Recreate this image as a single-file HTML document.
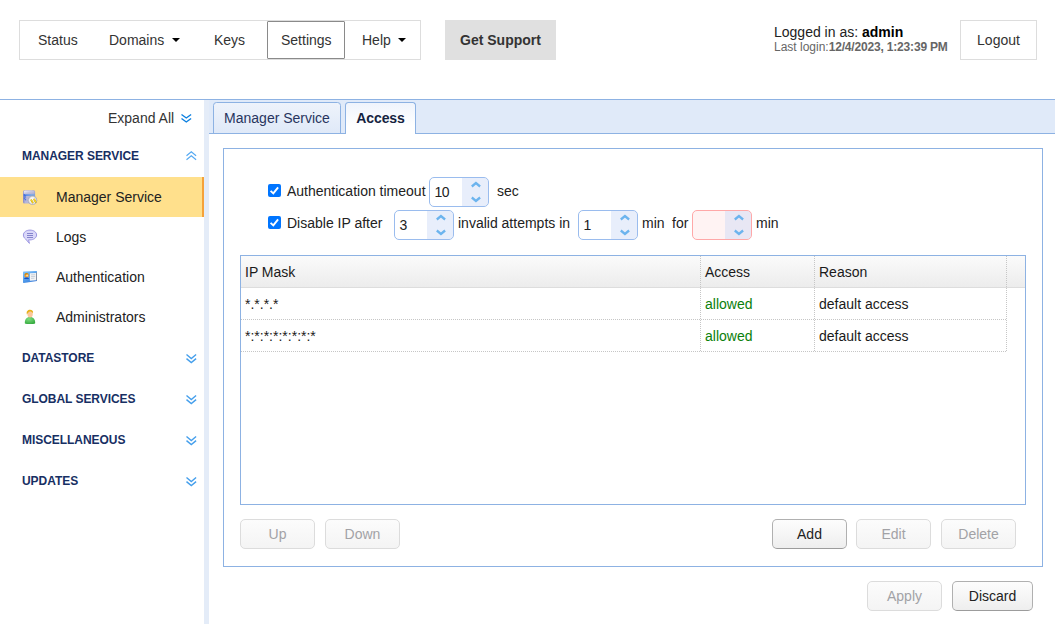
<!DOCTYPE html>
<html lang="en">
<head>
<meta charset="utf-8">
<title>Settings - Access</title>
<style>
*{box-sizing:border-box;margin:0;padding:0}
html,body{width:1055px;height:624px;overflow:hidden;background:#fff}
body{font-family:"Liberation Sans",Arial,sans-serif;font-size:14px;color:#333;position:relative}
.abs{position:absolute}
/* top nav */
#nav{left:19px;top:20px;width:402px;height:40px;border:1px solid #ddd;background:#fff}
#nav span{position:absolute;top:0;line-height:38px;font-size:14px;color:#333;white-space:nowrap}
#settings{left:267px;top:21px;width:78px;height:38px;border:1px solid #8a8a8a;border-radius:1px;background:#fff}
.caret{position:absolute;width:0;height:0;border-left:4px solid transparent;border-right:4px solid transparent;border-top:4px solid #000}
#support{left:445px;top:20px;width:111px;height:40px;background:#e0e0e0;color:#333;font-weight:bold;font-size:14px;line-height:40px;text-align:center}
#logged{left:774px;top:24px;font-size:14px;line-height:16px;color:#222;white-space:nowrap}
#logged b{color:#000}
#last{left:774px;top:40px;font-size:12px;line-height:14px;color:#666;white-space:nowrap}
#last b{letter-spacing:-.18px}
#logout{left:960px;top:20px;width:77px;height:40px;border:1px solid #ddd;background:#fff;font-size:14px;line-height:38px;text-align:center;color:#333}
/* main frame */
#topline{left:0;top:99px;width:1055px;height:1px;background:#8db2e3}
#tabbar{left:205px;top:100px;width:850px;height:34px;background:#e0eaf9;border-bottom:1px solid #8db2e3}
#split{left:204px;top:100px;width:5px;height:524px;background:#e4ecf8}
.tab{position:absolute;top:102px;height:32px;border:1px solid #8db2e3;border-bottom:none;border-radius:3.5px 3.5px 0 0;font-size:14px;line-height:30px;text-align:center;white-space:nowrap}
#tab1{left:213px;width:128px;background:linear-gradient(#eef3fb,#dfe9f8);color:#28355e;border-bottom:1px solid #8db2e3}
#tab2{left:345px;width:71px;background:linear-gradient(#eff4fc,#fff 75%);color:#15233f;font-weight:bold;height:32px;letter-spacing:-.1px}
/* sidebar */
#expand{left:108px;top:110px;font-size:14px;line-height:16px;color:#333;white-space:nowrap}
.sec{position:absolute;left:22px;font-size:12px;font-weight:bold;color:#172f63;letter-spacing:-.05px;line-height:14px;white-space:nowrap}
.item{position:absolute;left:56px;font-size:14px;line-height:16px;color:#222;white-space:nowrap}
#sel{left:0;top:177px;width:204px;height:40px;background:#ffe08c;border-right:2px solid #f5a23a}
svg.chev{position:absolute;overflow:visible}
/* panel */
#panel{left:223px;top:148px;width:820px;height:419px;border:1px solid #8db2e3;background:#fff}
.lbl{position:absolute;font-size:14px;line-height:16px;color:#222;white-space:nowrap}
.spin{position:absolute;width:60px;height:30px;border:1px solid #9abcee;border-radius:5px;background:#fff;overflow:hidden;font-size:14px;line-height:28px;color:#222;padding-left:4.4px;letter-spacing:-.5px}
.spin i{position:absolute;right:0;top:0;width:26px;height:28px;background:rgba(200,215,246,.42)}
.spin.bad{border-color:#ffa8a8;background:#fff3f3}
.cb{position:absolute;width:13px;height:13px;border-radius:2px;background:#0075ff}
#grid{left:240px;top:255px;width:786px;height:250px;border:1px solid #8db2e3;background:#fff}
#ghead{left:241px;top:256px;width:784px;height:32px;background:linear-gradient(#fbfbfb,#ececec);border-bottom:1px solid #ddd}
.hd{position:absolute;height:1px;background:repeating-linear-gradient(90deg,#c6c6c6 0 1px,transparent 1px 2px)}
.vd{position:absolute;width:1px;background:repeating-linear-gradient(180deg,#c6c6c6 0 1px,transparent 1px 2px)}
.cell{position:absolute;font-size:14px;line-height:16px;color:#1a1a1a;white-space:nowrap}
.ok{color:#0a800a}
.btn{position:absolute;width:75px;height:30px;border:1px solid #b0b0b0;border-bottom-color:#9c9c9c;border-radius:5px;background:linear-gradient(#fdfdfd,#eee);font-size:14px;line-height:28px;text-align:center;color:#222}
.btn.dis{border-color:#dcdcdc;background:linear-gradient(#fcfcfc,#f4f4f4);color:#a2a2a6}
</style>
</head>
<body>
<!-- top nav -->
<div id="nav" class="abs">
  <span style="left:18px">Status</span>
  <span style="left:89px">Domains</span>
  <span style="left:194px">Keys</span>
  <span style="left:342px">Help</span>
</div>
<div id="settings" class="abs"><span style="position:absolute;left:13px;top:0;line-height:36px;font-size:14px;color:#333">Settings</span></div>
<div class="caret" style="left:172px;top:38px"></div>
<div class="caret" style="left:398px;top:38px"></div>
<div id="support" class="abs">Get Support</div>
<div id="logged" class="abs">Logged in as: <b>admin</b></div>
<div id="last" class="abs">Last login:<b>12/4/2023, 1:23:39 PM</b></div>
<div id="logout" class="abs">Logout</div>

<!-- frame -->
<div id="topline" class="abs"></div>
<div id="tabbar" class="abs"></div>
<div id="split" class="abs"></div>
<div id="tab1" class="tab">Manager Service</div>
<div id="tab2" class="tab">Access</div>

<!-- sidebar -->
<div id="expand" class="abs">Expand All</div>
<div id="sel" class="abs"></div>
<div class="sec" style="top:149px">MANAGER SERVICE</div>
<div class="item" style="top:189px">Manager Service</div>
<div class="item" style="top:229px">Logs</div>
<div class="item" style="top:269px">Authentication</div>
<div class="item" style="top:309px">Administrators</div>
<div class="sec" style="top:351px">DATASTORE</div>
<div class="sec" style="top:392px">GLOBAL SERVICES</div>
<div class="sec" style="top:433px">MISCELLANEOUS</div>
<div class="sec" style="top:474px">UPDATES</div>

<svg class="chev" style="left:180.6px;top:113.6px" width="11" height="10" viewBox="0 0 11 10"><path d="M0.5 0.5 L5.3 4 L10.1 0.5 M0.5 4.5 L5.3 8 L10.1 4.5" fill="none" stroke="#0a7fe0" stroke-width="1.4"/></svg>
<svg class="chev" style="left:185.7px;top:150.5px" width="11" height="10" viewBox="0 0 11 10"><path d="M0.5 4.7 L5.3 0.7 L10.1 4.7 M0.5 8.8 L5.3 4.8 L10.1 8.8" fill="none" stroke="#55a9f2" stroke-width="1.15"/></svg>
<svg class="chev" style="left:185.7px;top:353.7px" width="11" height="10" viewBox="0 0 11 10"><path d="M0.5 0.5 L5.3 4.5 L10.1 0.5 M0.5 4.6 L5.3 8.6 L10.1 4.6" fill="none" stroke="#459fec" stroke-width="1.4"/></svg>
<svg class="chev" style="left:185.7px;top:394.7px" width="11" height="10" viewBox="0 0 11 10"><path d="M0.5 0.5 L5.3 4.5 L10.1 0.5 M0.5 4.6 L5.3 8.6 L10.1 4.6" fill="none" stroke="#459fec" stroke-width="1.4"/></svg>
<svg class="chev" style="left:185.7px;top:435.7px" width="11" height="10" viewBox="0 0 11 10"><path d="M0.5 0.5 L5.3 4.5 L10.1 0.5 M0.5 4.6 L5.3 8.6 L10.1 4.6" fill="none" stroke="#459fec" stroke-width="1.4"/></svg>
<svg class="chev" style="left:185.7px;top:476.7px" width="11" height="10" viewBox="0 0 11 10"><path d="M0.5 0.5 L5.3 4.5 L10.1 0.5 M0.5 4.6 L5.3 8.6 L10.1 4.6" fill="none" stroke="#459fec" stroke-width="1.4"/></svg>
<svg class="abs" style="left:20px;top:186px" width="20" height="20" viewBox="0 0 20 20">
<defs><linearGradient id="srv" x1="0" y1="0" x2="1" y2="0"><stop offset="0" stop-color="#8586c2"/><stop offset=".18" stop-color="#b4b5da"/><stop offset=".7" stop-color="#b9bad8"/><stop offset="1" stop-color="#9596c4"/></linearGradient>
<linearGradient id="srt" x1="0" y1="0" x2="1" y2="1"><stop offset="0" stop-color="#f4f4fb"/><stop offset=".45" stop-color="#c4c5df"/><stop offset="1" stop-color="#a9aace"/></linearGradient>
<linearGradient id="sbl" x1="0" y1="0" x2="1" y2="0"><stop offset="0" stop-color="#2a6be6"/><stop offset="1" stop-color="#62b4f6"/></linearGradient>
<radialGradient id="dsk" cx=".5" cy=".5" r=".5"><stop offset="0" stop-color="#ffffff"/><stop offset=".62" stop-color="#f4f4f2"/><stop offset=".85" stop-color="#c2c2c8"/><stop offset="1" stop-color="#9c9cac"/></radialGradient></defs>
<rect x="3" y="4.2" width="12.1" height="13.4" rx="1.5" fill="url(#srv)"/>
<rect x="3.7" y="4.7" width="10.9" height="3.6" rx="1.1" fill="url(#srt)"/>
<rect x="3.8" y="8.5" width="11" height="1.15" fill="url(#sbl)"/>
<path d="M3.8 8.5h1.1v1h1.2v1h-1.2v.9h1.2v.9h-1.2v.9h1.2v1h-1.2v-1h-1.1v-.9h1.1v-.9h-1.1v-.9h1.1v-1h-1.1z" fill="#2b63dc"/>
<circle cx="12.5" cy="14.3" r="4.7" fill="url(#dsk)"/>
<path d="M11.3 14.2 L12.7 16.5 M14.2 13.5 L15.7 15.9" stroke="#c9a10a" stroke-width="1.8" stroke-linecap="round"/>
<path d="M11.3 14 L12.6 16.2 M14.2 13.3 L15.6 15.6" stroke="#f7d726" stroke-width="1.2" stroke-linecap="round"/>
</svg>
<svg class="abs" style="left:20px;top:226px" width="20" height="20" viewBox="0 0 20 20">
<path d="M10 4.1 C13.8 4.1 16.6 6.2 16.6 9 C16.6 11.8 13.6 13.9 10 13.9 C9.6 13.9 9 13.85 8.6 13.8 L9.4 17.4 L5.4 12.8 C4.1 11.9 3.4 10.5 3.4 9 C3.4 6.2 6.2 4.1 10 4.1 Z" fill="#dad8f9" stroke="#9d97e2" stroke-width="1"/>
<path d="M7 7.5 H13 M7 9.5 H13 M7 11.5 H13" stroke="#8584cc" stroke-width="1"/>
</svg>
<svg class="abs" style="left:20px;top:266px" width="20" height="20" viewBox="0 0 20 20">
<defs><linearGradient id="idc" x1="0" y1="0" x2=".6" y2="1"><stop offset="0" stop-color="#86c4f8"/><stop offset=".55" stop-color="#56a2ee"/><stop offset="1" stop-color="#3a7edc"/></linearGradient></defs>
<path d="M3 5.9 Q3 5.5 3.5 5.5 L16.5 5 Q17 5 17 5.5 L17 15 L3.8 16.9 Q3 17 3 16.3 Z" fill="url(#idc)"/>
<path d="M9.9 7.3 L16.1 7 L16.1 14.2 L9.9 14.7 Z" fill="#f4f4f4"/>
<path d="M16.1 6.6 L17 6.4 L17 14.6 L16.1 14.2 Z" fill="#8f929c"/>
<path d="M11 8.9 L15.2 8.7 M11 10.6 L15.2 10.4 M11 12.4 L14.4 12.2" stroke="#c3ccd8" stroke-width=".9"/>
<circle cx="6.6" cy="9.4" r="2.2" fill="#f59a23"/>
<path d="M4.5 9 A2.15 2.15 0 0 1 8.7 8.6 C7.6 8.2 6.2 8.4 4.5 9 Z" fill="#c98a12"/>
<circle cx="7.1" cy="9.6" r="1" fill="#fbd9a5"/>
<path d="M4.1 12.9 C4.3 10.9 8.8 10.9 9 12.9 Z" fill="#1c4fbe"/>
</svg>
<svg class="abs" style="left:20px;top:306px" width="20" height="20" viewBox="0 0 20 20">
<defs><radialGradient id="usr" cx=".4" cy=".3" r=".8"><stop offset="0" stop-color="#7fdc7f"/><stop offset="1" stop-color="#2fa63a"/></radialGradient></defs>
<path d="M4.9 17.4 C4.4 13.6 6.6 11 10 11 C13.4 11 15.6 13.6 15.1 17.4 C13.4 18.3 6.6 18.3 4.9 17.4 Z" fill="url(#usr)"/>
<ellipse cx="10.1" cy="8" rx="2.7" ry="3.4" fill="#fbc79b"/>
<path d="M6.9 8.4 C6.1 5.4 7.8 3.8 10 3.8 C12.2 3.8 13.6 5.2 13 7.2 C12 5.8 10.6 5.4 9.3 5.7 C8.2 6.3 7.6 7.3 6.9 8.4 Z" fill="#e6b11b"/>
</svg>

<!-- panel -->
<div id="panel" class="abs"></div>
<svg class="abs" style="left:268px;top:184px" width="13" height="13" viewBox="0 0 13 13"><rect width="13" height="13" rx="2" fill="#0075ff"/><path d="M2.6 6.9 L5.3 9.4 L10.1 3.3" fill="none" stroke="#fff" stroke-width="1.9" stroke-linecap="butt" stroke-linejoin="miter"/></svg>
<svg class="abs" style="left:268px;top:216px" width="13" height="13" viewBox="0 0 13 13"><rect width="13" height="13" rx="2" fill="#0075ff"/><path d="M2.6 6.9 L5.3 9.4 L10.1 3.3" fill="none" stroke="#fff" stroke-width="1.9" stroke-linecap="butt" stroke-linejoin="miter"/></svg>
<div class="lbl" style="left:287px;top:183px">Authentication timeout</div>
<div class="spin" style="left:429px;top:177px">10<i><svg width="26" height="28" viewBox="0 0 26 28" style="position:absolute;left:0;top:0"><path d="M9.8 8.5 L13.95 5.1 L18.1 8.5 M9.8 19.5 L13.95 22.9 L18.1 19.5" fill="none" stroke="#6cb4ee" stroke-width="2.3"/></svg></i></div>
<div class="lbl" style="left:497px;top:183px">sec</div>
<div class="lbl" style="left:287px;top:215px">Disable IP after</div>
<div class="spin" style="left:394px;top:210px">3<i><svg width="26" height="28" viewBox="0 0 26 28" style="position:absolute;left:0;top:0"><path d="M9.8 8.5 L13.95 5.1 L18.1 8.5 M9.8 19.5 L13.95 22.9 L18.1 19.5" fill="none" stroke="#6cb4ee" stroke-width="2.3"/></svg></i></div>
<div class="lbl" style="left:458px;top:215px">invalid attempts in</div>
<div class="spin" style="left:578px;top:210px">1<i><svg width="26" height="28" viewBox="0 0 26 28" style="position:absolute;left:0;top:0"><path d="M9.8 8.5 L13.95 5.1 L18.1 8.5 M9.8 19.5 L13.95 22.9 L18.1 19.5" fill="none" stroke="#6cb4ee" stroke-width="2.3"/></svg></i></div>
<div class="lbl" style="left:642px;top:215px">min</div>
<div class="lbl" style="left:672px;top:215px">for</div>
<div class="spin bad" style="left:692px;top:210px"><i><svg width="26" height="28" viewBox="0 0 26 28" style="position:absolute;left:0;top:0"><path d="M9.8 8.5 L13.95 5.1 L18.1 8.5 M9.8 19.5 L13.95 22.9 L18.1 19.5" fill="none" stroke="#6cb4ee" stroke-width="2.3"/></svg></i></div>
<div class="lbl" style="left:756px;top:215px">min</div>

<div id="grid" class="abs"></div>
<div id="ghead" class="abs"></div>
<div class="hd" style="left:241px;top:319px;width:766px"></div>
<div class="hd" style="left:241px;top:351px;width:766px"></div>
<div class="vd" style="left:700px;top:256px;height:96px"></div>
<div class="vd" style="left:814px;top:256px;height:96px"></div>
<div class="vd" style="left:1006px;top:256px;height:96px"></div>
<div class="cell" style="left:245px;top:264px">IP Mask</div>
<div class="cell" style="left:705px;top:264px">Access</div>
<div class="cell" style="left:819px;top:264px">Reason</div>
<div class="cell" style="left:245px;top:296px">*.*.*.*</div>
<div class="cell ok" style="left:705px;top:296px">allowed</div>
<div class="cell" style="left:819px;top:296px">default access</div>
<div class="cell" style="left:245px;top:328px">*:*:*:*:*:*:*:*</div>
<div class="cell ok" style="left:705px;top:328px">allowed</div>
<div class="cell" style="left:819px;top:328px">default access</div>

<div class="btn dis" style="left:240px;top:519px">Up</div>
<div class="btn dis" style="left:325px;top:519px">Down</div>
<div class="btn" style="left:772px;top:519px">Add</div>
<div class="btn dis" style="left:856px;top:519px">Edit</div>
<div class="btn dis" style="left:941px;top:519px">Delete</div>
<div class="btn dis" style="left:867px;top:581px">Apply</div>
<div class="btn" style="left:952px;top:581px;width:81px">Discard</div>
</body>
</html>
